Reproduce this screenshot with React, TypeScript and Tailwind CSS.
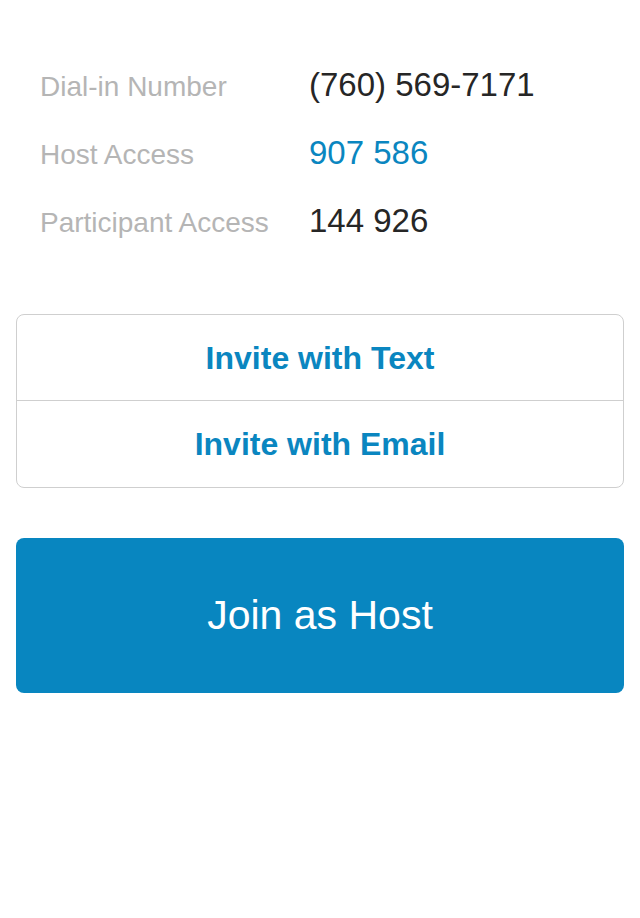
import React from 'react';

// --- detail rows ---

interface DetailRowProps {
    label: string;
    value: string;
    highlight?: boolean;
}

const DetailRow: React.FC<DetailRowProps> = ({ label, value, highlight }) => (
    <div className="flex items-baseline h-[68px]">
        <span className="w-[269px] shrink-0 text-[28px] leading-[68px] text-[#b5b5b5]">{label}</span>
        <span className={`text-[33px] leading-[68px] ${highlight ? 'text-[#0a86c0]' : 'text-[#262626]'}`}>{value}</span>
    </div>
);

const App: React.FC = () => {
    const details = [
        { label: 'Dial-in Number', value: '(760) 569-7171' },
        { label: 'Host Access', value: '907 586', highlight: true },
        { label: 'Participant Access', value: '144 926' },
    ];

    return (
        <div className="min-h-[918px] bg-white font-['Liberation_Sans',Arial,sans-serif]">
            <div className="pt-[51px] pl-10">
                {details.map((d) => (
                    <DetailRow key={d.label} label={d.label} value={d.value} highlight={d.highlight} />
                ))}
            </div>

            {/* invite options */}
            <div className="mx-4 mt-[59px] border border-[#cfcfcf] rounded-[8px] overflow-hidden">
                <button className="w-full h-[85px] flex items-center justify-center text-[32px] font-bold text-[#0a86c0]">
                    Invite with Text
                </button>
                <div className="h-px bg-[#cfcfcf]" />
                <button className="w-full h-[86px] flex items-center justify-center text-[32px] font-bold text-[#0a86c0]">
                    Invite with Email
                </button>
            </div>

            <div className="mx-4 mt-[50px]">
                <button className="w-full h-[155px] rounded-[8px] bg-[#0886c0] text-white text-[41px] flex items-center justify-center">
                    Join as Host
                </button>
            </div>
        </div>
    );
};

export default App;
